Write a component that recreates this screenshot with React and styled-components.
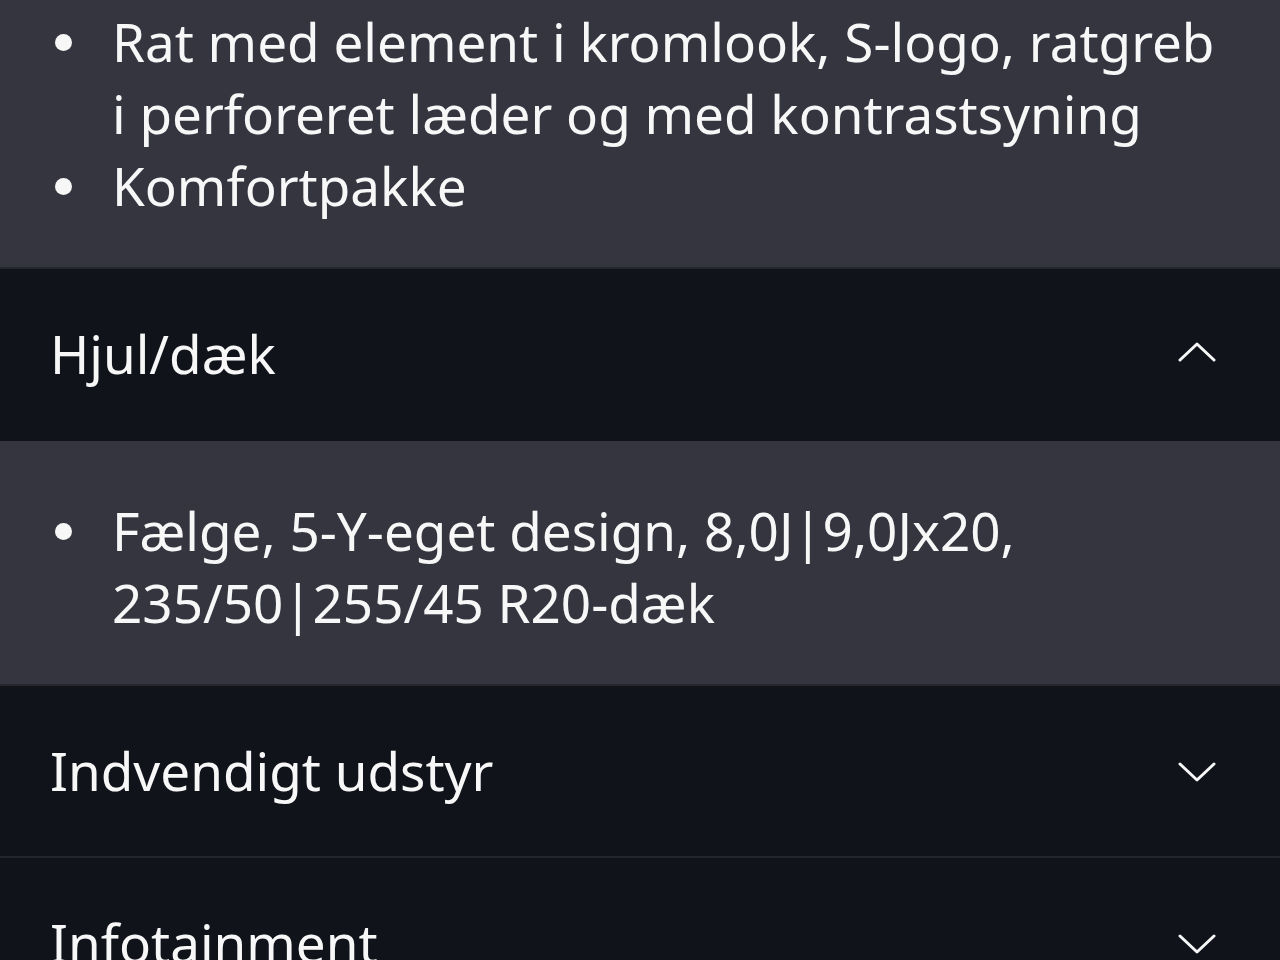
import React from 'react';
import styled, { createGlobalStyle } from 'styled-components';

const GlobalStyle = createGlobalStyle`
  html, body {
    margin: 0;
    padding: 0;
    background: #10131a;
    overflow: hidden;
  }
  * { box-sizing: border-box; }
`;

const Viewport = styled.div`
  height: 960px;
  overflow: hidden;
  font-family: 'Noto Sans', 'Open Sans', sans-serif;
  color: #f7f7f8;
`;

// the page is scrolled part way down the spec list
const Scroller = styled.div`
  margin-top: -48px;
`;

const Panel = styled.div`
  background: #34353e;
  padding: 54px 50px 45px 50px;
  border-bottom: 2px solid #26272d;
`;

const List = styled.ul`
  list-style: none;
  margin: 0;
  padding: 0;
`;

const Item = styled.li`
  position: relative;
  padding-left: 62px;
  font-size: 53px;
  line-height: 72px;

  &::before {
    content: '';
    position: absolute;
    left: 5px;
    top: 28px;
    width: 17px;
    height: 17px;
    border-radius: 50%;
    background: #f7f7f8;
  }
`;

const Header = styled.button`
  display: flex;
  align-items: center;
  justify-content: space-between;
  width: 100%;
  height: 172px;
  padding: 0 64px ${(p) => (p.$divider ? '0' : '2px')} 50px;
  border: none;
  border-bottom: ${(p) => (p.$divider ? '2px solid #23252c' : 'none')};
  background: #10131a;
  color: inherit;
  font: inherit;
  font-size: 53px;
  text-align: left;
  cursor: pointer;
`;

const Title = styled.span`
  line-height: 72px;
`;

const Chevron = styled.svg`
  width: 38px;
  height: 22px;
  flex-shrink: 0;
  margin-top: ${(p) => (p.$up ? -4 : 2)}px;
`;

const ChevronIcon = ({ up }) => (
  <Chevron $up={up} viewBox="0 0 38 22" fill="none">
    <polyline
      points={up ? '2,19 19,3 36,19' : '2,3 19,19 36,3'}
      stroke="#f7f7f8"
      strokeWidth="3"
      strokeLinecap="round"
      strokeLinejoin="round"
    />
  </Chevron>
);

const Section = ({ title, open, divider, items }) => (
  <>
    <Header $open={open} $divider={divider}>
      <Title>{title}</Title>
      <ChevronIcon up={open} />
    </Header>
    {open && (
      <Panel>
        <List>
          {items.map((t) => (
            <Item key={t}>{t}</Item>
          ))}
        </List>
      </Panel>
    )}
  </>
);

export default function App() {
  return (
    <Viewport>
      <GlobalStyle />
      <Scroller>
        <Panel>
          <List>
            <Item>Rat med element i kromlook, S-logo, ratgreb i perforeret læder og med kontrastsyning</Item>
            <Item>Komfortpakke</Item>
          </List>
        </Panel>
        <Section
          title="Hjul/dæk"
          open
          items={['Fælge, 5-Y-eget design, 8,0J|9,0Jx20, 235/50|255/45 R20-dæk']}
        />
        <Section title="Indvendigt udstyr" divider />
        <Section title="Infotainment" divider />
      </Scroller>
    </Viewport>
  );
}
